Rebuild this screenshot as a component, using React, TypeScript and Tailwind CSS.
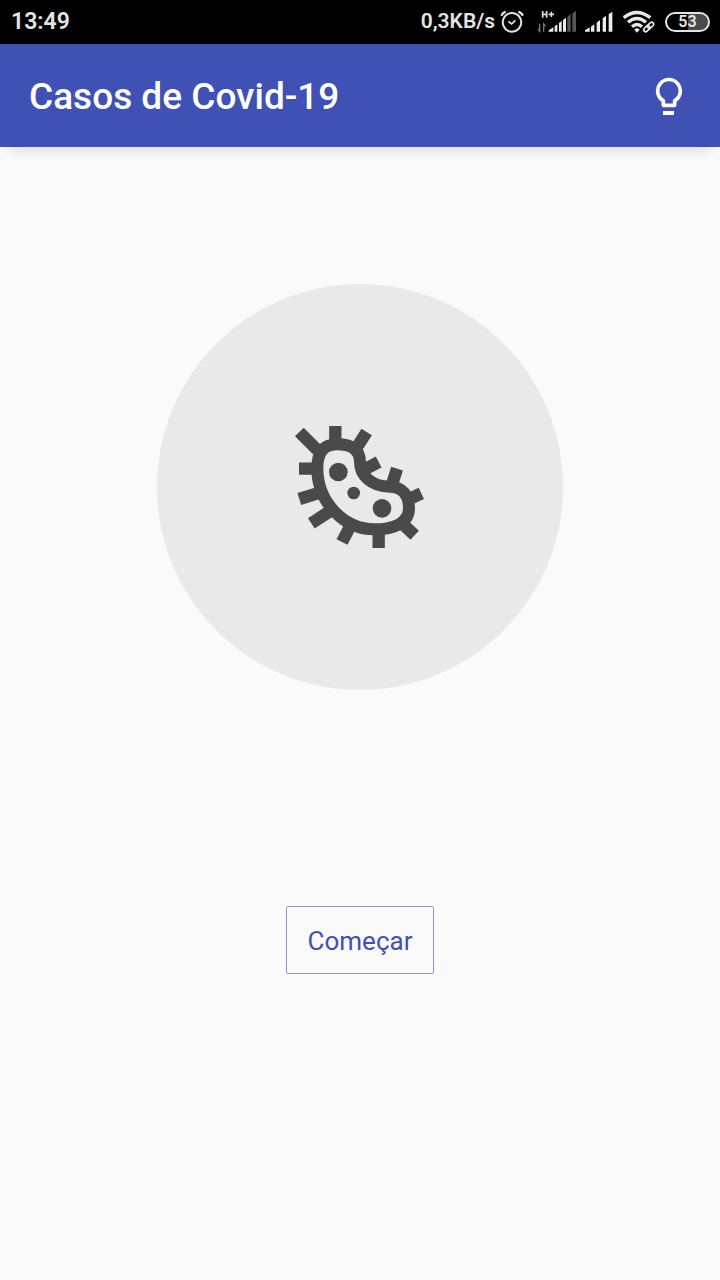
function AlarmIcon() {
  return (
    <svg className="h-7 w-6" viewBox="0 0 72 84" fill="none" stroke="#e4e4e4" aria-hidden="true">
      <circle cx="36" cy="43" r="28" strokeWidth="6" />
      <path d="M25 40 L35 48 L46 37" strokeWidth="5" />
      <path d="M4 23 Q8 14 17 11 M55 11 Q64 14 69 23" strokeWidth="7" />
    </svg>
  );
}

function MobileDataIcon() {
  return (
    <svg className="h-7 w-10" viewBox="0 0 120 84" fill="none" aria-hidden="true">
      <path
        d="M14 9 V29 M14 19 H26 M26 9 V29 M32 19 H48 M40 11 V27"
        stroke="#dedede"
        strokeWidth="5"
      />
      <path d="M5 47 V70 L-1 63 M17 71 V48 L23 55" stroke="#777" strokeWidth="4" />
      <path d="M32 71 V67 L46 58 V71Z M50 71 V55 L58 49 V71Z M63 71 V45 L71 39 V71Z M75 71 V36 L84 29 V71Z" fill="#ececec" />
      <path d="M88 71 V26 L98 18 V71Z M103 71 V16 L114 9 V71Z" fill="#555" />
    </svg>
  );
}

function SignalIcon() {
  return (
    <svg className="h-7 w-7" viewBox="0 0 84 84" fill="#ececec" aria-hidden="true">
      <path d="M0 71 V67 L14 58 V71Z M18 71 V56 L28 49 V71Z M35 71 V44 L45 36 V71Z M53 71 V31 L63 23 V71Z M71 71 V19 L82 11 V71Z" />
    </svg>
  );
}

function WifiIcon() {
  return (
    <svg className="h-7 w-8" viewBox="0 0 96 84" fill="none" stroke="#e8e8e8" aria-hidden="true">
      <path d="M2 29 Q42 -2 82 29 M15 43 Q42 20 69 43 M27 56 Q42 43 57 56" strokeWidth="10" />
      <path d="M34 65 Q42 57 50 65 L42 74Z" fill="#e8e8e8" stroke="none" />
      <g strokeWidth="5" transform="rotate(-43 77 57)">
        <rect x="59" y="51" width="21" height="12" rx="6" />
        <rect x="74" y="51" width="21" height="12" rx="6" />
      </g>
    </svg>
  );
}

function BulbIcon() {
  return (
    <svg className="h-10 w-[30px]" viewBox="69 45 90 120" fill="none" stroke="#fff" aria-hidden="true">
      <path
        d="M100 133 V119 A34 34 0 1 1 134 119 V133Z"
        strokeWidth="11"
        strokeLinejoin="round"
      />
      <path d="M99 156 H132" strokeWidth="12" />
    </svg>
  );
}

function GermIcon() {
  return (
    <svg className="h-[154px] w-40" viewBox="0 0 480 462" fill="none" stroke="#4a4a4a" aria-hidden="true">
      <path
        d="M112 175 C112 125 132 103 172 103 C215 103 240 120 240 155 C240 195 272 230 330 230 C365 230 387 255 387 295 C387 340 340 358 285 358 C190 358 112 275 112 175Z"
        strokeWidth="36"
      />
      <path
        d="M58 66 L112 120 M166 48 V96 M260 66 L231 112 M296 156 L250 180 M351 176 L336 224 M424 250 L378 272 M404 376 L368 342 M296 414 V360 M186 396 L212 346 M94 340 L146 306 M58 267 L112 250 M57 176 H108"
        strokeWidth="37"
      />
      <g fill="#4a4a4a" stroke="none">
        <circle cx="175" cy="186" r="28" />
        <circle cx="221" cy="249" r="19" />
        <circle cx="306" cy="295" r="28" />
      </g>
    </svg>
  );
}

export default function App() {
  return (
    <div className="flex min-h-screen flex-col bg-[#fafafa] font-['Roboto',sans-serif]">
      <div className="flex h-11 items-center justify-between bg-black pl-[11px] pr-2.5 font-semibold text-[#e4e4e4]">
        <time className="text-[23px]">13:49</time>
        <div className="flex items-center">
          <span className="mr-[5px] text-[21px]">0,3KB/s</span>
          <AlarmIcon />
          <div className="ml-3.5 flex items-center gap-[7px]">
            <MobileDataIcon />
            <SignalIcon />
          </div>
          <div className="ml-2.5 flex items-center gap-2.5">
            <WifiIcon />
            <div className="flex h-5 w-[45px] items-center justify-center rounded-full border-2 border-[#e4e4e4] bg-gradient-to-r from-black from-50% to-[#4a4a4a] to-50% text-base">
              53
            </div>
          </div>
        </div>
      </div>

      <header className="flex h-[103px] items-center justify-between bg-[#3f51b5] pl-[29px] pr-[37px] text-white shadow-[0_10px_14px_-8px_rgba(0,0,0,0.14)]">
        <h1 className="pt-0.5 text-[37px] font-medium">Casos de Covid-19</h1>
        <button type="button" aria-label="Dicas">
          <BulbIcon />
        </button>
      </header>

      <main className="flex flex-col items-center pt-[137px]">
        <div className="flex size-[406px] items-center justify-center rounded-full bg-[#e9e9e9]">
          <GermIcon />
        </div>
        <button
          type="button"
          className="mt-54 h-17 rounded-xs border border-[#8c97d2] px-[21px] pt-0.5 text-[26px] text-[#3f51b5]"
        >
          Começar
        </button>
      </main>
    </div>
  );
}
